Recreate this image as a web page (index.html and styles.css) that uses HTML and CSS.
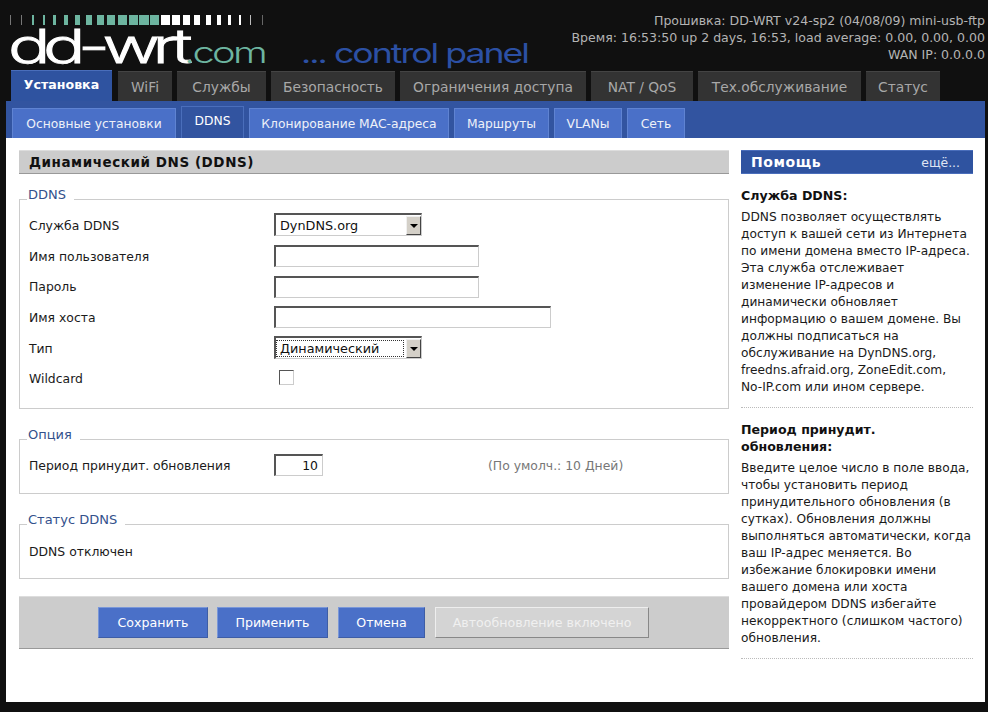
FILE: index.html
```html
<!DOCTYPE html>
<html lang="ru">
<head>
<meta charset="utf-8">
<title>DD-WRT control panel</title>
<link rel="stylesheet" href="styles.css">
</head>
<body>
<header class="header">
  <svg class="logo" width="540" height="70" viewBox="0 0 540 70" aria-label="dd-wrt.com control panel">
    <g fill="#777"><rect x="10" y="15" width="1" height="10"/><rect x="21" y="15" width="1" height="10"/></g>
    <g fill="#6db5a0">
      <rect x="32" y="15" width="2" height="10"/><rect x="43" y="15" width="2" height="10"/><rect x="53" y="15" width="3" height="10"/><rect x="64" y="15" width="4" height="10"/><rect x="75" y="15" width="5" height="10"/><rect x="86" y="15" width="6" height="10"/><rect x="97" y="15" width="7" height="10"/><rect x="107" y="15" width="8" height="10"/><rect x="118" y="15" width="9" height="10"/><rect x="129" y="15" width="9" height="10"/><rect x="139" y="15" width="10" height="10"/><rect x="150" y="15" width="9" height="10"/>
    </g>
    <g fill="#fff">
      <rect x="161" y="15" width="9" height="10"/><rect x="172" y="15" width="8" height="10"/><rect x="183" y="15" width="7" height="10"/><rect x="194" y="15" width="6" height="10"/><rect x="206" y="15" width="5" height="10"/><rect x="217" y="15" width="4" height="10"/><rect x="228" y="15" width="3" height="10"/><rect x="239" y="15" width="2" height="10"/>
    </g>
    <rect x="250" y="15" width="1" height="10" fill="#bbb"/><rect x="262" y="15" width="1" height="10" fill="#666"/>
    <text class="logo-main" x="8" y="63" textLength="177" lengthAdjust="spacingAndGlyphs">dd-wrt</text>
    <text class="logo-com" x="184" y="63" textLength="81" lengthAdjust="spacingAndGlyphs">.com</text>
    <text class="logo-panel" x="301" y="63" textLength="227" lengthAdjust="spacingAndGlyphs">... control panel</text>
  </svg>
  <div class="sysinfo">
    <div>Прошивка: DD-WRT v24-sp2 (04/08/09) mini-usb-ftp</div>
    <div>Время: 16:53:50 up 2 days, 16:53, load average: 0.00, 0.00, 0.00</div>
    <div>WAN IP: 0.0.0.0</div>
  </div>
</header>

<nav class="tabs">
  <a class="tab tab-active tab-w1">Установка</a>
  <a class="tab tab-w2">WiFi</a>
  <a class="tab tab-w3">Службы</a>
  <a class="tab tab-w4">Безопасность</a>
  <a class="tab tab-w5">Ограничения доступа</a>
  <a class="tab tab-w6">NAT / QoS</a>
  <a class="tab tab-w7">Тех.обслуживание</a>
  <a class="tab tab-w8">Статус</a>
</nav>

<div class="panel">
  <nav class="subtabs">
    <a class="subtab sub-w1">Основные установки</a>
    <a class="subtab subtab-active sub-w2">DDNS</a>
    <a class="subtab sub-w3">Клонирование MAC-адреса</a>
    <a class="subtab sub-w4">Маршруты</a>
    <a class="subtab sub-w5">VLANы</a>
    <a class="subtab sub-w6">Сеть</a>
  </nav>

  <div class="content">
    <main class="main">
      <h2 class="page-title">Динамический DNS (DDNS)</h2>

      <fieldset class="group group-ddns">
        <legend>DDNS</legend>
        <div class="row"><label>Служба DDNS</label><div class="select"><span class="select-value">DynDNS.org</span><span class="select-btn"></span></div></div>
        <div class="row"><label>Имя пользователя</label><input class="input input-md" type="text"></div>
        <div class="row"><label>Пароль</label><input class="input input-md" type="text"></div>
        <div class="row"><label>Имя хоста</label><input class="input input-lg" type="text"></div>
        <div class="row"><label>Тип</label><div class="select"><span class="select-value select-focus">Динамический</span><span class="select-btn"></span></div></div>
        <div class="row"><label>Wildcard</label><span class="checkbox"></span></div>
      </fieldset>

      <fieldset class="group group-option">
        <legend>Опция</legend>
        <div class="row"><label>Период принудит. обновления</label><input class="input input-sm" type="text" value="10"><span class="hint">(По умолч.: 10 Дней)</span></div>
      </fieldset>

      <fieldset class="group group-status">
        <legend>Статус DDNS</legend>
        <div class="row">DDNS отключен</div>
      </fieldset>

      <div class="actions">
        <button class="btn btn-1">Сохранить</button>
        <button class="btn btn-2">Применить</button>
        <button class="btn btn-3">Отмена</button>
        <button class="btn btn-off">Автообновление включено</button>
      </div>
    </main>

    <aside class="help">
      <div class="help-title"><span>Помощь</span><a>ещё...</a></div>
      <section class="help-item">
        <h3>Служба DDNS:</h3>
        <p>DDNS позволяет осуществлять доступ к вашей сети из Интернета по имени домена вместо IP-адреса. Эта служба отслеживает изменение IP-адресов и динамически обновляет информацию о вашем домене. Вы должны подписаться на обслуживание на DynDNS.org, freedns.afraid.org, ZoneEdit.com, <span class="nowrap">No-IP.com</span> или ином сервере.</p>
      </section>
      <section class="help-item">
        <h3>Период принудит.<br>обновления:</h3>
        <p>Введите целое число в поле ввода, чтобы установить период принудительного обновления (в сутках). Обновления должны выполняться автоматически, когда ваш IP-адрес меняется. Во избежание блокировки имени вашего домена или хоста провайдером DDNS избегайте некорректного (слишком частого) обновления.</p>
      </section>
    </aside>
  </div>
</div>
</body>
</html>
```
FILE: styles.css
```css
* { box-sizing: border-box; }
html, body { margin: 0; padding: 0; }
body {
  width: 988px;
  height: 712px;
  overflow: hidden;
  background: #101010;
  color: #1a1a1a;
  font-family: "DejaVu Sans", sans-serif;
  font-size: 12.4px;
}
.header { height: 70px; display: flex; justify-content: space-between; }
.logo { display: block; flex: none; overflow: visible; }
.logo-main { font-family: "Inter", sans-serif; font-weight: 300; font-size: 47px; letter-spacing: -5px; fill: #fff; stroke: #fff; stroke-width: .8px; }
.logo-com { font-family: "Inter", sans-serif; font-weight: 300; font-size: 29px; letter-spacing: -2px; fill: #6db5a0; }
.logo-panel { font-family: "Inter", sans-serif; font-weight: 400; font-size: 27px; letter-spacing: -1.5px; fill: #2c50a4; }
.sysinfo {
  padding: 12px 3px 0 0;
  text-align: right;
  color: #b4b4b4;
  font-size: 12.55px;
  line-height: 17px;
}
.tabs { height: 31px; display: flex; align-items: flex-end; gap: 5px; padding-left: 11px; }
.tab {
  height: 30px;
  display: flex;
  align-items: center;
  justify-content: center;
  background: #333;
  border-top: 1px solid #444;
  color: #a8a8a8;
  font-size: 13.8px;
  white-space: nowrap;
  padding-top: 1px;
}
.tab-active { height: 31px; background: #2f53a0; border-top-color: #4a6ebb; color: #fff; font-weight: 700; font-size: 12.6px; padding: 0 0 3px; margin-right: 1px; }
.tab-w1 { width: 101px; }
.tab-w2 { width: 54px; }
.tab-w3 { width: 89px; }
.tab-w4 { width: 124px; }
.tab-w5 { width: 186px; }
.tab-w6 { width: 102px; }
.tab-w7 { width: 163px; }
.tab-w8 { width: 74px; }
.panel { margin-left: 6px; width: 979px; height: 601px; background: #fff; }
.subtabs { height: 37px; background: #3254a0; display: flex; align-items: flex-end; gap: 5px; padding-left: 6px; }
.subtab {
  height: 30px;
  display: flex;
  align-items: center;
  justify-content: center;
  background: #4a70c8;
  border: 1px solid #5f83d2;
  border-bottom: 0;
  color: #eef1f8;
  font-size: 12.3px;
  white-space: nowrap;
}
.subtab-active { height: 32px; background: #3254a0; border-color: #4a6ebb; color: #fff; padding-bottom: 3px; }
.sub-w1 { width: 164px; }
.sub-w2 { width: 63px; }
.sub-w3 { width: 200px; }
.sub-w4 { width: 95px; }
.sub-w5 { width: 68px; }
.sub-w6 { width: 58px; }
.content { display: flex; padding: 12px 12px 0 13px; gap: 12px; }
.main { width: 710px; flex: none; }
.page-title {
  margin: 0;
  height: 24px;
  line-height: 22px;
  padding-left: 10px;
  background: #ccc;
  border-top: 1px solid #ddd;
  border-bottom: 1px solid #999;
  color: #111;
  font-size: 13.5px;
  font-weight: 700;
  letter-spacing: .55px;
}
.group { margin: 22px 0 0; padding: 3px 10px 0 9px; border: 1px solid #ccc; min-width: 0; }
.group legend { position: relative; top: -4px; margin-left: -2px; padding: 0 8px 0 1px; line-height: 16px; color: #33518c; font-size: 13px; }
.group-ddns { margin-top: 17px; height: 218px; }
.group-option { height: 63px; }
.group-status { height: 63px; }
.row { height: 30.7px; display: flex; align-items: center; }
.group-status .row { height: 32px; }
.row label { width: 245px; flex: none; }
.input { height: 22px; padding: 0 4px; background: #fff; border: 1px solid #ccc; border-top: 2px solid #555; border-left: 2px solid #555; font: inherit; color: #111; outline: none; }
.input-md { width: 205px; }
.input-lg { width: 277px; }
.input-sm { width: 49px; text-align: right; }
.hint { margin-left: 165px; color: #777; }
.select { width: 148px; height: 23px; margin-top: -1px; display: flex; align-items: center; background: #fff; border: 1px solid #ccc; border-top: 2px solid #555; border-left: 2px solid #555; }
.select-value { flex: 1; padding-left: 4px; color: #111; font-size: 12.8px; }
.select-focus { margin: 1px 2px 1px 0; outline: 1px dotted #333; outline-offset: -1px; line-height: 17px; padding-left: 4px; }
.select-btn { position: relative; width: 15px; height: 19px; background: #d4d0c8; border: 1px solid; border-color: #f0f0f0 #444 #444 #f0f0f0; }
.select-btn::after { content: ""; position: absolute; left: 3px; top: 7px; border: 4px solid transparent; border-top: 4px solid #000; border-bottom: 0; }
.checkbox { width: 15px; height: 15px; margin: -3px 0 0 5px; background: #fff; border: 1px solid #ccc; border-top-color: #555; border-left-color: #555; }
.actions {
  margin-top: 17px;
  height: 53px;
  padding-top: 10px;
  display: flex;
  align-items: flex-start;
  background: #ccc;
  border-top: 1px solid #ddd;
  border-bottom: 1px solid #999;
  padding-left: 79px;
}
.btn {
  height: 31px;
  margin-right: 10px;
  padding: 0;
  background: #4a70c8;
  border: 1px solid;
  border-color: #7a97d8 #3e5da5 #3e5da5 #7a97d8;
  color: #fff;
  font: inherit;
  font-size: 12.6px;
}
.btn-1 { width: 110px; margin-right: 9px; }
.btn-2 { width: 111px; }
.btn-3 { width: 87px; }
.btn-off { width: 214px; background: #d4d4d4; border-color: #eee #888 #888 #eee; color: #f0f0f0; }
.help { width: 232px; flex: none; }
.help-title { height: 24px; padding: 0 13px 0 10px; display: flex; justify-content: space-between; align-items: center; background: #2f53a0; border-top: 1px solid #4a6ebb; border-bottom: 1px solid #4a6ebb; color: #fff; }
.help-title span { font-weight: 700; font-size: 14px; letter-spacing: .6px; }
.help-title a { color: #dfe5f3; }
.help-item { padding: 13px 0 11px; border-bottom: 1px dotted #bbb; }
.help-item h3 { margin: 0 0 5px; font-size: 12.6px; font-weight: 700; line-height: 17px; color: #111; }
.help-item p { margin: 0; font-size: 12.2px; line-height: 17px; color: #1a1a1a; }
.nowrap { white-space: nowrap; }
```
